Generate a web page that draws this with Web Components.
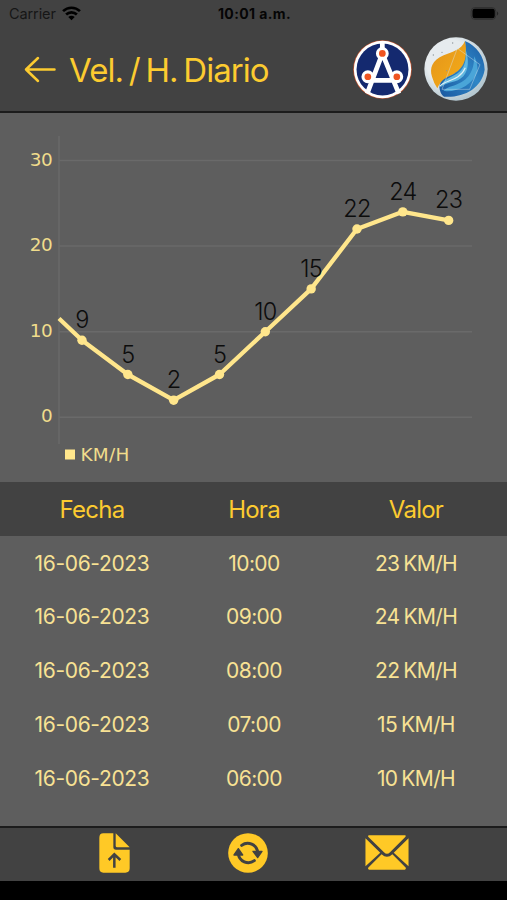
<!DOCTYPE html>
<html lang="es">
<head>
<meta charset="utf-8">
<title>Vel. / H. Diario</title>
<style>
    body {
        margin: 0;
        background: #000;
        font-family: Inter, "Liberation Sans", sans-serif;
    }
</style>
</head>
<body>
<daily-app></daily-app>

<script>
class StatusBar extends HTMLElement {
    constructor() {
        super();
        this.shadowDOM = this.attachShadow({mode: "open"});
    }

    connectedCallback() {
        this.render();
    }

    render() {
        this.shadowDOM.innerHTML = `
        <style>
        :host {
            display: grid;
            grid-template-columns: 1fr auto 1fr;
            align-items: center;
            height: 27px;
            padding: 0 7px 0 9px;
            color: #050505;
            font-size: 14.5px;
            line-height: 27px;
        }

        .left {
            display: flex;
            align-items: center;
            gap: 6px;
            color: #161616;
            letter-spacing: -.1px;
        }

        .time {
            font-weight: 700;
            font-size: 14px;
            letter-spacing: .4px;
        }

        .battery {
            justify-self: end;
        }

        svg {
            display: block;
        }
        </style>
        <div class="left">
            <span>Carrier</span>
            <svg width="19" height="15" viewBox="0 0 18 14">
                <path d="M1 4.8C5.5.4 12.5.4 17 4.8M3.9 8C6.8 5.2 11.2 5.2 14.1 8" fill="none" stroke="#000" stroke-width="2.5"/>
                <path d="M9 13.5L5.9 10.4Q9 7.9 12.1 10.4Z"/>
            </svg>
        </div>
        <span class="time"><slot></slot></span>
        <svg class="battery" width="30" height="13" viewBox="0 0 31 14">
            <rect x=".6" y=".6" width="26.5" height="12.8" rx="4" fill="none" stroke="#303030"/>
            <rect x="2" y="2" width="24" height="10" rx="2.4"/>
            <path d="M28.5 4.8Q31 7 28.5 9.2Z" fill="#222"/>
        </svg>
        `;
    }
}

class TitleBar extends HTMLElement {
    constructor() {
        super();
        this.shadowDOM = this.attachShadow({mode: "open"});
    }

    connectedCallback() {
        this.render();
    }

    render() {
        this.shadowDOM.innerHTML = `
        <style>
        :host {
            display: flex;
            align-items: center;
            height: 84px;
            padding: 0 19px 0 24px;
            color: #fccb30;
        }

        h1 {
            flex: 1;
            margin: 1px 0 0 13px;
            font-size: 33px;
            font-weight: 400;
            line-height: 40px;
            letter-spacing: -.95px;
            word-spacing: -2.6px;
            white-space: nowrap;
        }

        .logos {
            display: flex;
            align-items: center;
            gap: 12px;
        }

        svg {
            display: block;
        }
        </style>
        <svg width="32" height="27" viewBox="0 0 32 26">
            <path d="M14 1.5L2 13L14 24.5M2 13H30.5" fill="none" stroke="#fccb30" stroke-width="2.5" stroke-linecap="round" stroke-linejoin="round"/>
        </svg>
        <h1><slot></slot></h1>
        <div class="logos">
            <svg width="59" height="59" viewBox="0 0 175 175">
                <circle cx="87.5" cy="87.5" r="87" fill="#c4532f"/>
                <circle cx="87.5" cy="87.5" r="85" fill="#fff"/>
                <circle cx="87.5" cy="87.5" r="77" fill="#14296f"/>
                <path d="M87 8V40L42 159M87 40L136 159M44 120H130" fill="none" stroke="#fff" stroke-width="14"/>
                <g fill="#ef5420" stroke="#fff" stroke-width="9">
                    <circle cx="87" cy="40" r="14.5"/>
                    <circle cx="44" cy="109" r="14.5"/>
                    <circle cx="130" cy="109" r="14.5"/>
                </g>
            </svg>
            <svg width="64" height="64" viewBox="0 0 192 192">
                <defs>
                    <radialGradient id="ball" cx=".4" cy=".4" r=".6">
                        <stop offset=".6" stop-color="#e6ebee"/>
                        <stop offset="1" stop-color="#b5c8d1"/>
                    </radialGradient>
                    <linearGradient id="flame" x1="0" y1="0" x2="1" y2="1">
                        <stop offset="0" stop-color="#e2931a"/>
                        <stop offset="1" stop-color="#f6ae18"/>
                    </linearGradient>
                    <linearGradient id="water" x1="1" y1="0" x2="0" y2="1">
                        <stop offset="0" stop-color="#1c5ca4"/>
                        <stop offset=".45" stop-color="#2f86c6"/>
                        <stop offset="1" stop-color="#1958a0"/>
                    </linearGradient>
                </defs>
                <circle cx="96" cy="96" r="95" fill="url(#ball)"/>
                <path d="M123 12C112 38 86 44 59 55C24 70 16 94 24 119Q30 140 40 154C48 134 64 124 88 112C122 96 136 64 123 12Z" fill="url(#flame)"/>
                <path d="M123 12C133 66 118 94 90 110C66 122 48 128 46 150Q48 172 60 179C119 183 173 154 182 98C181 58 158 27 123 12Z" fill="url(#water)"/>
                <path d="M124 36C130 76 118 102 92 114C68 126 54 132 50 150C74 132 96 140 118 118C134 100 136 66 124 36Z" fill="#62b8e0"/>
                <path d="M150 58C152 110 124 136 88 146Q66 152 58 162C104 166 146 142 160 104Q162 76 150 58Z" fill="#4aa5d8"/>
                <path d="M47 148C62 128 106 134 124 92" fill="none" stroke="#e2f1f6" stroke-width="3.5"/>
                <path d="M100 34L168 83L137 157L54 157L100 34" fill="none" stroke="#d8e7ee" stroke-width="2.5" opacity=".5"/>
                <g fill="#8d9599">
                    <circle cx="28" cy="54" r="2"/>
                    <circle cx="54" cy="46" r="2"/>
                    <circle cx="86" cy="18" r="2"/>
                    <circle cx="68" cy="101" r="2"/>
                </g>
            </svg>
        </div>
        `;
    }
}

class LineChart extends HTMLElement {
    constructor() {
        super();
        this.shadowDOM = this.attachShadow({mode: "open"});
    }

    connectedCallback() {
        this.render();
    }

    render() {
        const values = this.getAttribute("values").split(",").map(Number);
        const px = i => 82 + i * 45.83;
        const py = v => 304.3 - v * 8.56;
        const points = values.map((v, i) => `${px(i)},${py(v)}`).join(" ");

        const grid = [0, 10, 20, 30].map(v => `
            <path class="grid" d="M59 ${py(v)}H472"/>
            <text class="tick" x="52.3" y="${py(v) + 5}" text-anchor="end">${v}</text>
        `).join("");

        const dots = values.map((v, i) => `
            <circle cx="${px(i)}" cy="${py(v)}" r="4.7"/>
        `).join("");

        const labels = values.map((v, i) => `
            <text class="value" x="${px(i)}" y="${py(v) - 12}" text-anchor="middle">${v}</text>
        `).join("");

        this.shadowDOM.innerHTML = `
        <style>
        :host {
            display: block;
            height: 369.4px;
        }

        svg {
            display: block;
        }

        .grid {
            fill: none;
            stroke: #6a6a6a;
            stroke-width: 1.5;
        }

        .tick {
            fill: #f0dc8c;
            font: 18.4px "DejaVu Sans", sans-serif;
            letter-spacing: -.4px;
        }

        .unit {
            letter-spacing: .3px;
        }

        .value {
            fill: #0c0c0c;
            font-size: 23.5px;
            font-weight: 300;
            letter-spacing: -.8px;
        }

        .series {
            fill: #ffe68c;
        }
        </style>
        <svg width="507" height="369" viewBox="0 0 507 369">
            ${grid}
            <path class="grid" d="M59 23V331"/>
            <polyline points="59,205.5 ${points}" fill="none" stroke="#ffe68c" stroke-width="4.3" stroke-linejoin="round"/>
            <g class="series">
                ${dots}
                <rect x="65" y="336.5" width="10" height="10"/>
            </g>
            ${labels}
            <text class="tick unit" x="80.5" y="348">${this.getAttribute("unit")}</text>
        </svg>
        `;
    }
}

class DataRow extends HTMLElement {
    constructor() {
        super();
        this.shadowDOM = this.attachShadow({mode: "open"});
    }

    connectedCallback() {
        this.render();
    }

    render() {
        const cells = this.getAttribute("cells").split("|");
        this.shadowDOM.innerHTML = `
        <style>
        :host {
            display: grid;
            grid-template-columns: repeat(3, 162px);
            align-items: center;
            height: 53.8px;
            padding-left: 11px;
            color: #f8e294;
            font-size: 21px;
            letter-spacing: -.35px;
            text-align: center;
        }

        span:nth-child(n + 3) {
            letter-spacing: -.6px;
        }

        span:last-child {
            word-spacing: -1.5px;
        }

        :host([head]) {
            background: #424242;
            color: #fccb30;
            font-size: 24px;
        }

        :host([head]) span {
            letter-spacing: -.75px;
        }
        </style>
        ${cells.map(cell => `<span>${cell}</span>`).join("")}
        `;
    }
}

class ActionBar extends HTMLElement {
    constructor() {
        super();
        this.shadowDOM = this.attachShadow({mode: "open"});
    }

    connectedCallback() {
        this.render();
    }

    render() {
        this.shadowDOM.innerHTML = `
        <style>
        :host {
            display: flex;
            align-items: center;
            justify-content: space-between;
            box-sizing: border-box;
            height: 55px;
            padding: 0 98px 3px 99px;
            border-top: 2px solid #1c1c1c;
            background: #424242;
        }

        svg {
            display: block;
            fill: #ffc926;
        }
        </style>
        <svg width="31" height="40" viewBox="0 0 93 120">
            <path d="M13 1H43V42Q43 50 51 50H92V106Q92 119 79 119H13Q1 119 1 106V14Q1 1 13 1Z"/>
            <path d="M50 1L92 43H55Q50 43 50 38Z"/>
            <path d="M46 104V66M29 81L46 64L64 81" fill="none" stroke="#424242" stroke-width="7.5"/>
        </svg>
        <svg width="40" height="40" viewBox="0 0 120 120">
            <circle cx="60" cy="60" r="59.5"/>
            <path d="M41 37A30 30 0 0 1 89 58M79 83A30 30 0 0 1 31 62" fill="none" stroke="#424242" stroke-width="9" stroke-linecap="round"/>
            <path d="M75 55H102L89 74ZM18 66L31 47L44 66Z" fill="#424242" stroke="#424242" stroke-width="4" stroke-linejoin="round"/>
        </svg>
        <svg width="44" height="35" viewBox="0 0 130 104">
            <path d="M11 1H119Q122 2 120 5L74 51Q65 60 56 51L9 5Q8 2 11 1Z"/>
            <path d="M1 10L45 53L1 93ZM129 10L85 53L129 93Z"/>
            <path d="M49 57Q65 72 81 57L121 97Q122 102 118 103H12Q7 102 9 97Z"/>
        </svg>
        `;
    }
}

class DailyApp extends HTMLElement {
    constructor() {
        super();
        this.shadowDOM = this.attachShadow({mode: "open"});
    }

    connectedCallback() {
        this.render();
    }

    render() {
        const rows = [
            ["16-06-2023", "10:00", "23 KM/H"],
            ["16-06-2023", "09:00", "24 KM/H"],
            ["16-06-2023", "08:00", "22 KM/H"],
            ["16-06-2023", "07:00", "15 KM/H"],
            ["16-06-2023", "06:00", "10 KM/H"],
        ];

        this.shadowDOM.innerHTML = `
        <style>
        :host {
            display: flex;
            flex-direction: column;
            width: 507px;
            height: 880.5px;
            background: #5e5e5e;
        }

        header {
            border-bottom: 2px solid #1c1c1c;
            background: #424242;
        }

        main {
            flex: 1;
        }
        </style>
        <header>
            <status-bar>10:01 a.m.</status-bar>
            <title-bar>Vel. / H. Diario</title-bar>
        </header>
        <main>
            <line-chart values="9,5,2,5,10,15,22,24,23" unit="KM/H"></line-chart>
            <data-row head cells="Fecha|Hora|Valor"></data-row>
            ${rows.map(row => `<data-row cells="${row.join("|")}"></data-row>`).join("")}
        </main>
        <action-bar></action-bar>
        `;
    }
}

customElements.define("status-bar", StatusBar);
customElements.define("title-bar", TitleBar);
customElements.define("line-chart", LineChart);
customElements.define("data-row", DataRow);
customElements.define("action-bar", ActionBar);
customElements.define("daily-app", DailyApp);
</script>
</body>
</html>
